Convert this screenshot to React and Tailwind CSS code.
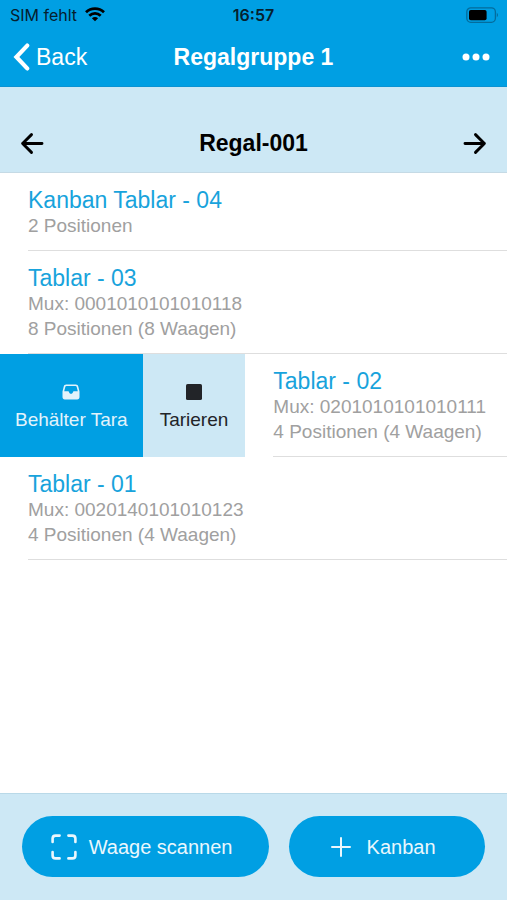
import { useState } from "react"

const shelves = [
  { id: "04", name: "Kanban Tablar - 04", lines: ["2 Positionen"] },
  { id: "03", name: "Tablar - 03", lines: ["Mux: 0001010101010118", "8 Positionen (8 Waagen)"] },
  { id: "02", name: "Tablar - 02", lines: ["Mux: 0201010101010111", "4 Positionen (4 Waagen)"] },
  { id: "01", name: "Tablar - 01", lines: ["Mux: 0020140101010123", "4 Positionen (4 Waagen)"] },
]

const WifiIcon = () => (
  <svg width="20" height="15" viewBox="0 0 20 15" fill="none" stroke="currentColor" strokeWidth="2.8" aria-hidden="true">
    <path d="M1 5.2C6 0.4 14 0.4 19 5.2" />
    <path d="M4.3 8.7C7.6 5.6 12.4 5.6 15.7 8.7" />
    <path d="M10 14.2L6.9 11.2C8.6 9.6 11.4 9.6 13.1 11.2Z" fill="currentColor" stroke="none" />
  </svg>
)

const BatteryIcon = () => (
  <svg width="34" height="16" viewBox="0 0 34 16" fill="none" aria-hidden="true">
    <rect x="1.8" y="0.9" width="28.6" height="14.4" rx="4" stroke="#046c9c" strokeWidth="1.3" />
    <rect x="4" y="3" width="17.6" height="10.2" rx="1.8" fill="#000" />
    <path d="M31.8 5.8C33.4 6.6 33.4 9.4 31.8 10.2Z" fill="#046c9c" />
  </svg>
)

const BackIcon = () => (
  <svg width="18" height="28" viewBox="0 0 18 28" fill="none" stroke="currentColor" strokeWidth="4.2" strokeLinecap="round" strokeLinejoin="miter" aria-hidden="true">
    <path d="M15.2 2.6L4.4 14L15.2 25.4" />
  </svg>
)

const ArrowIcon = ({ direction }) => (
  <svg width="24" height="24" viewBox="0 0 24 24" fill="none" stroke="currentColor" strokeWidth="2.9" strokeLinecap="round" strokeLinejoin="round" aria-hidden="true">
    {direction === "left" ? <path d="M11.5 3.6L2.6 12.5L11.5 21.4M2.6 12.5H22" /> : <path d="M12.5 3.6L21.4 12.5L12.5 21.4M21.4 12.5H2" />}
  </svg>
)

const TrayIcon = () => (
  <svg width="18" height="16" viewBox="0 0 18 16" aria-hidden="true">
    <path
      fill="currentColor"
      fillRule="evenodd"
      d="M4.2 0.4H13.8C15.1 0.4 15.9 1.1 16.2 2.3L17.5 7.4V13C17.5 14.6 16.7 15.5 15.2 15.5H2.8C1.3 15.5 0.5 14.6 0.5 13V7.4L1.8 2.3C2.1 1.1 2.9 0.4 4.2 0.4ZM4.4 2C3.8 2 3.5 2.3 3.3 2.9L2.2 7.2H6.2C6.7 7.2 6.9 7.5 7 8C7.2 9.1 7.9 9.8 9 9.8C10.1 9.8 10.8 9.1 11 8C11.1 7.5 11.3 7.2 11.8 7.2H15.8L14.7 2.9C14.5 2.3 14.2 2 13.6 2Z"
    />
  </svg>
)

const SquareIcon = () => (
  <svg width="16" height="16" viewBox="0 0 16 16" aria-hidden="true">
    <rect width="16" height="16" rx="1.6" fill="currentColor" />
  </svg>
)

const ScanIcon = () => (
  <svg width="26" height="26" viewBox="0 0 26 26" fill="none" stroke="currentColor" strokeWidth="2.6" strokeLinecap="round" aria-hidden="true">
    <path d="M1.6 8V4.6C1.6 2.6 2.6 1.6 4.6 1.6H8.6" />
    <path d="M17.4 1.6H21.4C23.4 1.6 24.4 2.6 24.4 4.6V8" />
    <path d="M24.4 18V21.4C24.4 23.4 23.4 24.4 21.4 24.4H17.4" />
    <path d="M8.6 24.4H4.6C2.6 24.4 1.6 23.4 1.6 21.4V18" />
  </svg>
)

const PlusIcon = () => (
  <svg width="20" height="20" viewBox="0 0 20 20" fill="none" stroke="currentColor" strokeWidth="2" strokeLinecap="round" aria-hidden="true">
    <path d="M10 1V19M1 10H19" />
  </svg>
)

const ShelfRow = ({ shelf, swiped, onToggle }) => {
  return (
    <li className="flex overflow-hidden">
      {swiped && (
        <div className="flex shrink-0 text-[19px] leading-6">
          <button className="flex flex-col items-center justify-center gap-2 bg-[#009fe3] px-[15px] pt-1 text-[#e2f3fb]">
            <TrayIcon />
            <span>Behälter Tara</span>
          </button>
          <button className="flex flex-col items-center justify-center gap-2 bg-[#cde8f5] px-[17px] pt-1 text-[#222428]">
            <SquareIcon />
            <span>Tarieren</span>
          </button>
        </div>
      )}
      <div className="min-w-0 flex-1 pl-7">
        <button onClick={onToggle} className="block w-full border-b border-[#dedede] pt-[14px] pb-3 text-left whitespace-nowrap">
          <span className="block text-[23px] leading-[26px] text-[#18a3dc]">{shelf.name}</span>
          {shelf.lines.map((line) => (
            <span key={line} className="block text-[19px] leading-[25px] text-[#a0a0a0]">
              {line}
            </span>
          ))}
        </button>
      </div>
    </li>
  )
}

const App = () => {
  const [swipedId, setSwipedId] = useState("02")

  const toggleSwipe = (id) => {
    setSwipedId((prev) => (prev === id ? null : id))
  }

  return (
    <div className="flex min-h-screen flex-col bg-white font-['Liberation_Sans',Arial,sans-serif]">
      <header className="border-b border-[#0b93d2] bg-[#009fe3] text-white">
        <div className="grid h-7 grid-cols-[1fr_auto_1fr] items-center px-2 pt-px font-['Inter',sans-serif] text-base text-[#06202e]">
          <div className="flex items-center gap-2 pl-[2px]">
            <span>SIM fehlt</span>
            <span className="text-black">
              <WifiIcon />
            </span>
          </div>
          <span className="font-semibold">16:57</span>
          <div className="flex justify-end">
            <BatteryIcon />
          </div>
        </div>
        <div className="grid h-[58px] grid-cols-[1fr_auto_1fr] items-center px-3 text-[23px]">
          <button className="flex items-center gap-[6px] justify-self-start">
            <BackIcon />
            <span>Back</span>
          </button>
          <h1 className="font-bold">Regalgruppe 1</h1>
          <button aria-label="Mehr" className="justify-self-end pr-[5px]">
            <svg width="28" height="8" viewBox="0 0 28 8" fill="currentColor" aria-hidden="true">
              <circle cx="4" cy="4" r="3.5" />
              <circle cx="14" cy="4" r="3.5" />
              <circle cx="24" cy="4" r="3.5" />
            </svg>
          </button>
        </div>
      </header>

      <div className="grid grid-cols-[1fr_auto_1fr] items-center border-b border-[#c5dae5] bg-[#cde8f5] px-5 pt-[39px] pb-3 text-black">
        <button aria-label="Vorheriges Regal" className="justify-self-start">
          <ArrowIcon direction="left" />
        </button>
        <h2 className="text-[23px] leading-[34px] font-bold">Regal-001</h2>
        <button aria-label="Nächstes Regal" className="justify-self-end">
          <ArrowIcon direction="right" />
        </button>
      </div>

      <main className="flex-1">
        <ul>
          {shelves.map((shelf) => (
            <ShelfRow key={shelf.id} shelf={shelf} swiped={swipedId === shelf.id} onToggle={() => toggleSwipe(shelf.id)} />
          ))}
        </ul>
      </main>

      <footer className="flex gap-5 border-t border-[#b9d9e8] bg-[#cde8f5] px-[22px] pt-[22px] pb-[23px] text-xl text-[#eaf7fd]">
        <button className="flex h-[61px] flex-[14] items-center justify-center gap-3 rounded-full bg-[#009fe3] pr-2 whitespace-nowrap">
          <ScanIcon />
          <span>Waage scannen</span>
        </button>
        <button className="flex h-[61px] flex-[11] items-center justify-center gap-4 rounded-full bg-[#009fe3] pr-2 whitespace-nowrap">
          <PlusIcon />
          <span>Kanban</span>
        </button>
      </footer>
    </div>
  )
}

export default App
